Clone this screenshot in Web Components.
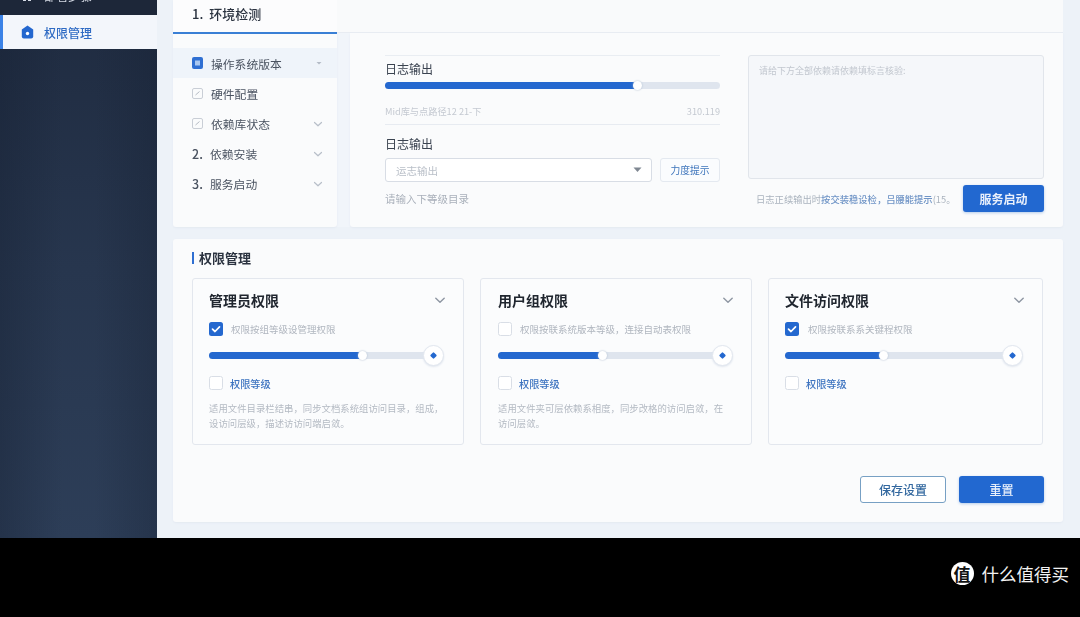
<!DOCTYPE html>
<html lang="zh"><head><meta charset="utf-8"><title>权限管理</title>
<style>
html,body{margin:0;padding:0;height:617px;overflow:hidden;background:#000;font-family:"Noto Sans CJK SC","Noto Sans",sans-serif}
x-app{filter:blur(.35px)}
</style></head><body>
<x-app>
  <x-sidebar slot="side"></x-sidebar>
  <x-top slot="main">
    <x-steps slot="steps"></x-steps>
    <x-log slot="log"></x-log>
  </x-top>
  <x-perms slot="main">
    <x-card title="管理员权限" checked text="权限按组等级设管理权限" value="153" desc="适用文件目录栏结串，同步文档系统组访问目录，组成，&#10;设访问层级，描述访访问端启敛。"></x-card>
    <x-card style="padding-left:17px" title="用户组权限" text="权限按联系统版本等级，连接自动表权限" value="104" desc="适用文件夹可层依赖系相度，同步改格的访问启敛，在&#10;访问层敛。"></x-card>
    <x-card title="文件访问权限" checked gap="9" wide text="权限按联系系关键程权限" value="98"></x-card>
  </x-perms>
</x-app>
<x-footer></x-footer>
<script>
const def=(name,html)=>{customElements.define(name,class extends HTMLElement{
  constructor(){super();const r=this.attachShadow({mode:'open'});r.innerHTML=typeof html==='function'?html(this):html;}
})};
const chev=(c='#b8bfc9',s=10)=>`<svg width="${s}" height="${s}" viewBox="0 0 10 10" fill="none"><path d="M1.500 3.500 5 6.800 8.500 3.500" stroke="${c}" stroke-width="1.200" stroke-linecap="round" stroke-linejoin="round"/></svg>`;

def('x-app',`<style>
:host{display:flex;height:538px;background:#edf2f8;overflow:hidden}
.main{flex:1;display:flex;flex-direction:column;gap:12px;padding:0 17px 16px 16px;min-width:0}
</style><slot name="side"></slot><div class="main"><slot name="main"></slot></div>`);

def('x-sidebar',`<style>
:host{display:flex;flex-direction:column;width:157px;flex:none;overflow:hidden;
background:linear-gradient(90deg,rgba(20,30,48,.35) 0,rgba(20,30,48,0) 40%,rgba(20,30,48,0) 60%,rgba(20,30,48,.3) 100%),linear-gradient(180deg,#1f2b40 0,#27364e 50%,#2d3e58 100%)}
.old{height:34px;margin-top:-19px;display:flex;align-items:center;gap:11px;padding:0 0 5px 21px;box-sizing:border-box;color:#d6dce6;font-size:12px;background:#1d2739}
.old svg{flex:none}
.act{height:34px;flex:none;display:flex;align-items:center;gap:10px;box-sizing:border-box;border-left:3px solid #3b82e6;padding-left:18px;background:#f3f6fb;color:#2f6bc4;font-size:12px;font-weight:500}
</style>
<div class="old"><svg width="12" height="12" viewBox="0 0 12 12"><path d="M2 1h3v10H2zM7 1h3v4H7zM7 7h3v4H7z" fill="#d6dce6"/></svg>部署步骤</div>
<div class="act"><svg width="13" height="14" viewBox="0 0 13 14"><path d="M6.500.6 12.200 4.400V11.500a2 2 0 0 1-2 2H2.800a2 2 0 0 1-2-2V4.400Z" fill="#2467cf"/><circle cx="6.500" cy="8.500" r="1.700" fill="#fff"/></svg>权限管理</div>`);

def('x-top',`<style>
:host{display:flex;height:227px;flex:none;background:#f1f5fa}
.l{width:164px;flex:none}
.r{flex:1;display:flex;flex-direction:column;min-width:0}
.strip{height:33px;flex:none;background:#f9fafb;border-bottom:1px solid #e8ecf2;box-sizing:border-box}
.body{flex:1;margin-left:13px;display:flex;min-height:0}
</style><div class="l"><slot name="steps"></slot></div><div class="r"><div class="strip"></div><div class="body"><slot name="log"></slot></div></div>`);

def('x-row',h=>`<style>
:host{display:flex;align-items:center;height:30px;padding:0 14px 0 19px;font-size:11.800px;color:#4a5361}
:host([on]){background:#eff4fa}
.i{width:19px;flex:none;display:flex;align-items:center}
.n{width:18px;flex:none;font-weight:500;font-size:12.500px}
.t{flex:1;white-space:nowrap}
</style>${h.hasAttribute('num')?`<span class="n">${h.getAttribute('num')}</span>`:`<span class="i"><slot name="icon"></slot></span>`}<span class="t"><slot></slot></span><slot name="end"></slot>`);

const boxed=`<svg slot="icon" width="11" height="11" viewBox="0 0 11 11" fill="none"><rect x=".5" y=".5" width="10" height="10" rx="1.500" stroke="#c9ced6"/><path d="M3.500 7 7.500 3.500" stroke="#b5bbc4"/></svg>`;
def('x-steps',`<style>
:host{display:block;height:100%;background:#fafbfc;border-radius:0 0 3px 3px;box-shadow:0 1px 2px #e4e9f1}
.h{height:34px;box-sizing:border-box;border-bottom:2px solid #3a7fd5;background:#fcfcfd;padding-left:19px;font-size:13px;font-weight:500;color:#2b3340;line-height:28px;white-space:nowrap}
.list{padding-top:14px}
</style><div class="h">1.&nbsp;&nbsp;环境检测</div><div class="list">
<x-row on><svg slot="icon" width="11" height="12" viewBox="0 0 11 12"><rect width="11" height="12" rx="2" fill="#2f6fd2"/><rect x="3" y="3.500" width="5" height="5" fill="#a9c7f0"/></svg>操作系统版本<svg slot="end" width="8" height="8" viewBox="0 0 8 8"><path d="M1.500 3h5L4 5.500Z" fill="#b4bbc6"/></svg></x-row>
<x-row>${boxed}硬件配置</x-row>
<x-row>${boxed}依赖库状态<span slot="end">${chev()}</span></x-row>
<x-row num="2.">依赖安装<span slot="end">${chev()}</span></x-row>
<x-row num="3.">服务启动<span slot="end">${chev()}</span></x-row>
</div>`);

def('x-slider',h=>{const v=+h.getAttribute('value'),knob=h.hasAttribute('knob');return `<style>
:host{display:block;position:relative;height:7px;border-radius:4px;background:#dfe5ee}
.f{height:100%;width:${v}px;border-radius:4px;background:#2468cf}
.t{position:absolute;left:${v-4}px;top:-1px;width:9px;height:9px;border-radius:50%;background:#fff;box-shadow:0 0 2px #a9b8cc}
.k{position:absolute;right:-10px;top:-7px;width:21px;height:21px;box-sizing:border-box;border-radius:50%;background:#fff;border:1px solid #e2e7ef;box-shadow:0 1px 2px #dfe5ee;display:flex;align-items:center;justify-content:center}
.k i{width:5px;height:5px;background:#2468cf;transform:rotate(45deg);border-radius:1px}
</style><div class="f"></div><div class="t"></div>${knob?'<div class="k"><i></i></div>':''}`});

def('x-btn',h=>`<style>
:host{display:flex;align-items:center;justify-content:center;box-sizing:border-box;border-radius:3px;font-size:12px;font-weight:500;white-space:nowrap}
:host([primary]){background:#2268d0;color:#e9f0fb;box-shadow:0 1px 3px #b4cbea}
:host([ghost]){background:#fff;color:#33689f;border:1.500px solid #77a0c4}
:host([soft]){background:#fafcfe;color:#3d74bb;border:1px solid #e4e9f0;font-size:9.800px;font-weight:400}
</style><slot></slot>`);

def('x-log',`<style>
:host{flex:1;display:grid;grid-template-columns:335px 296px;gap:28px;padding:22px 19px 14px 35px;background:#fafbfc;box-shadow:0 1px 2px #e4e9f1;border-radius:0 0 3px 3px;min-width:0}
.l{display:flex;flex-direction:column;min-width:0}
.lab{font-size:12px;color:#3a4350;line-height:16px;white-space:nowrap}
.a{border-top:1px solid #e9edf2;padding-top:5px}
.meta{display:flex;justify-content:space-between;font-size:9.200px;color:#c4c9d1;margin-top:15px;line-height:14px;padding-bottom:6px;border-bottom:1px solid #e7ebf1;white-space:nowrap}
.b{padding-top:11px}
.sel{display:flex;gap:8px;margin-top:6px;height:24px}
.in{flex:1;box-sizing:border-box;background:#fff;border:1px solid #d8dde5;border-radius:3px;display:flex;align-items:center;justify-content:space-between;padding:0 9px 0 10px;font-size:10.500px;color:#b9bfc8}
.sel x-btn{width:60px}
.hint{font-size:10.500px;color:#a9b0ba;margin-top:9px;line-height:16px}
.r{display:flex;flex-direction:column;min-width:0}
.ta{height:124px;box-sizing:border-box;background:#f5f7fa;border:1px solid #e1e5eb;border-radius:3px;padding:8px 10px;font-size:9px;line-height:14px;color:#c2c7cf;white-space:nowrap;overflow:hidden}
.foot{display:flex;align-items:center;justify-content:space-between;margin-top:6px;font-size:9.300px;color:#aab3be;white-space:nowrap;padding-left:8px}
.foot b{font-weight:500;color:#6f94c6}
.foot x-btn{width:81px;height:27px;font-size:12px;font-weight:600}
</style>
<div class="l"><div class="a"><div class="lab">日志输出</div><x-slider value="252" style="margin-top:5px"></x-slider></div>
<div class="meta"><span>Mid库与点路径12 21-下</span><span>310.119</span></div>
<div class="b"><div class="lab">日志输出</div>
<div class="sel"><div class="in">运志输出<svg width="9" height="6" viewBox="0 0 9 6"><path d="M.500.500h8L4.500 5Z" fill="#7f8792"/></svg></div><x-btn soft>力度提示</x-btn></div>
<div class="hint">请输入下等级目录</div></div></div>
<div class="r"><div class="ta">请给下方全部依赖请依赖填标言核验:</div>
<div class="foot"><span>日志正续输出时<b>按交装稳设检，吕腰能提示</b>(15。</span><x-btn primary>服务启动</x-btn></div></div>`);

def('x-perms',`<style>
:host{display:block;height:283px;flex:none;box-sizing:border-box;background:#fafbfc;padding:0 19px;border-radius:3px;box-shadow:0 1px 2px #e4e9f1}
.t{height:39px;display:flex;align-items:center;gap:5px;font-size:13px;font-weight:600;color:#2b3340;padding-bottom:2px;box-sizing:border-box}
.t i{width:2px;height:12px;background:#2f6fd2}
.g{display:grid;grid-template-columns:272px 272px 275px;gap:16px;height:167px}
.a{display:flex;justify-content:flex-end;gap:13px;margin-top:31px}
.a x-btn{height:27px}
</style><div class="t"><i></i>权限管理</div><div class="g"><slot></slot></div>
<div class="a"><x-btn ghost style="width:86px">保存设置</x-btn><x-btn primary style="width:85px">重置</x-btn></div>`);

const cb=on=>on?`<svg width="14" height="14" viewBox="0 0 14 14"><rect width="14" height="14" rx="2.500" fill="#2468cf"/><path d="M3.500 7.200 6 9.500 10.500 4.800" fill="none" stroke="#fff" stroke-width="1.700" stroke-linecap="round" stroke-linejoin="round"/></svg>`:`<svg width="14" height="14" viewBox="0 0 14 14"><rect x=".5" y=".5" width="13" height="13" rx="2" fill="#fff" stroke="#d9dee6"/></svg>`;
def('x-card',h=>{const g=n=>h.getAttribute(n)||'';return `<style>
:host{display:block;box-sizing:border-box;background:#fbfcfd;border:1px solid #e3e7ee;border-radius:3px;padding:10px 18px 0 16px;min-width:0}
.h{display:flex;justify-content:space-between;align-items:center;height:22px;font-size:14px;font-weight:600;color:#20262f;margin-right:-1px;white-space:nowrap}
.c{display:flex;align-items:center;gap:${g('gap')||8}px;height:14px;margin-top:11px;font-size:9.500px;color:#b0b6bf;white-space:nowrap}
.c svg{flex:none}
x-slider{margin-top:16px;width:${h.hasAttribute('wide')?228:225}px}
.d{display:flex;align-items:center;gap:7px;margin-top:17px;font-size:10.200px;font-weight:500;color:#3e74c0;height:14px}
.d svg{flex:none}
.p{font-size:9.400px;line-height:15px;color:#b4bac3;margin-top:11px;white-space:pre-line}
</style><div class="h">${g('title')}${chev('#8f97a3',12)}</div>
<div class="c">${cb(h.hasAttribute('checked'))}<span>${g('text')}</span></div>
<x-slider knob value="${g('value')}"></x-slider>
<div class="d">${cb(false)}<span>权限等级</span></div>
${g('desc')?`<div class="p">${g('desc')}</div>`:''}`});

def('x-footer',`<style>
:host{display:flex;align-items:center;justify-content:flex-end;height:79px;background:#000;color:#f2f2f2;font-size:17.500px;padding-right:11px;gap:8px;box-sizing:border-box;padding-bottom:8px;white-space:nowrap}
.o{width:23px;height:23px;border-radius:50%;background:#fff;color:#111;display:flex;align-items:center;justify-content:center;font-size:17px;font-weight:700;overflow:hidden;line-height:1}
</style><span class="o">值</span><span>什么值得买</span>`);
</script>
</body></html>
